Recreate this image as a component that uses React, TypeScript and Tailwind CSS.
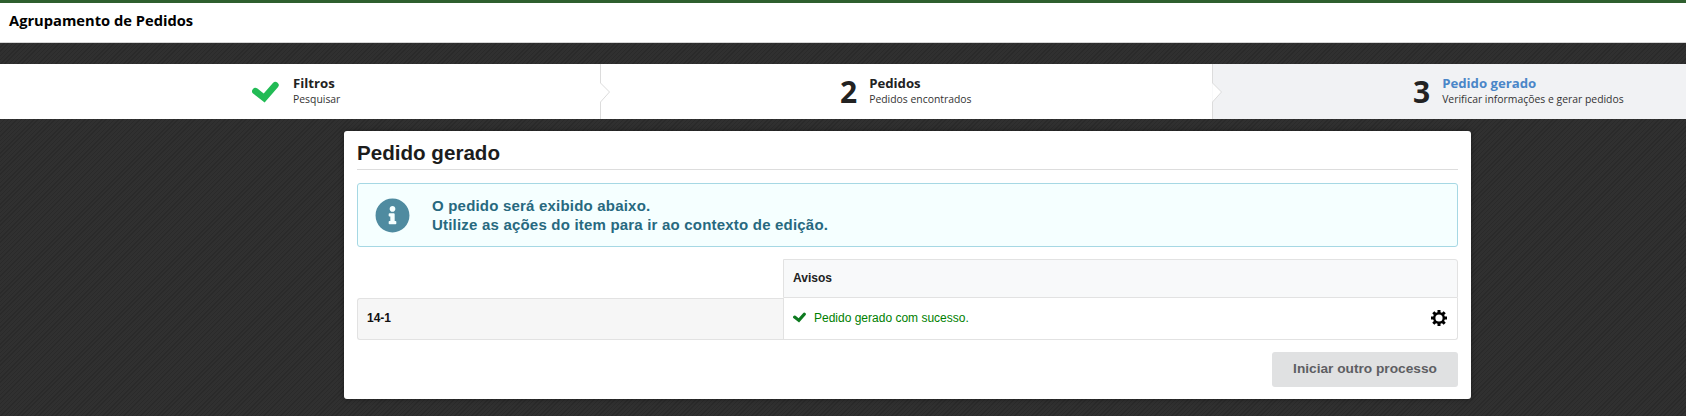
import React from 'react';
import { FaInfoCircle } from 'react-icons/fa';

const pattern =
  'bg-[#2e2e2e] bg-[repeating-linear-gradient(135deg,#2a2a2a_0px,#2a2a2a_1px,#303030_1px,#303030_3px)]';

// Seta entre as etapas do assistente
const Chevron: React.FC = () => (
  <svg className="absolute right-[-11px] top-0 z-10 h-[55px] w-[12px]" viewBox="0 0 12 55">
    <path d="M1.5 0V19L10.5 28L1.5 38V55" fill="#fff" stroke="#dcdcdc" strokeWidth="1" />
  </svg>
);

const CheckIcon: React.FC<{ className: string }> = ({ className }) => (
  <svg className={className} viewBox="0 0 27 22" fill="none">
    <path d="M3.4 10.2L12.2 17L23.4 4.2" stroke="currentColor" strokeWidth="6.6" strokeLinecap="round" />
  </svg>
);

const GearIcon: React.FC = () => (
  <svg className="ml-auto h-[16px] w-[16px] text-black" viewBox="0 0 16 16" fill="none" stroke="currentColor">
    <circle cx="8" cy="8" r="4.8" strokeWidth="2.4" />
    <path
      d="M8 0V3M8 13V16M0 8H3M13 8H16M2.3 2.3L4.4 4.4M11.6 11.6L13.7 13.7M13.7 2.3L11.6 4.4M4.4 11.6L2.3 13.7"
      strokeWidth="3"
    />
  </svg>
);

const StepText: React.FC<{ title: string; text: string; active?: boolean }> = ({ title, text, active }) => (
  <div className="flex flex-col pb-[3px]">
    <span className={active ? 'text-[13.2px] leading-[17px] font-bold text-[#4a86c8]' : 'text-[13.2px] leading-[17px] font-bold text-[#222222]'}>
      {title}
    </span>
    <span className="text-[10.4px] leading-[14px] text-[#333333]">{text}</span>
  </div>
);

const App: React.FC = () => {
  return (
    <div className={`flex min-h-screen flex-col font-['Open_Sans',sans-serif] ${pattern}`}>
      <header className="h-[43px] border-t-[3px] border-b border-t-[#2f5f2f] border-b-[#d5d5d5] bg-white pl-[9px] pt-[8px] text-[14.7px] leading-[19px] font-bold text-black">
        Agrupamento de Pedidos
      </header>

      <div className="mt-[21px] grid h-[55px] grid-cols-[600px_612px_1fr]">
        <div className="relative flex items-center bg-white pl-[252px]">
          <CheckIcon className="mr-[14px] h-[22px] w-[27px] text-[#22bb55]" />
          <StepText title="Filtros" text="Pesquisar" />
          <Chevron />
        </div>
        <div className="relative flex items-center bg-white pl-[240px]">
          <span className="mr-[12px] text-[30px] leading-none font-bold text-[#222222]">2</span>
          <StepText title="Pedidos" text="Pedidos encontrados" />
          <Chevron />
        </div>
        <div className="flex items-center bg-[#f1f2f4] pl-[201px]">
          <span className="mr-[12px] text-[30px] leading-none font-bold text-[#222222]">3</span>
          <StepText title="Pedido gerado" text="Verificar informações e gerar pedidos" active />
        </div>
      </div>

      <main className="mt-3 ml-[344px] h-[268px] w-[1127px] rounded-[3px] bg-white px-[13px] font-['Liberation_Sans',sans-serif] shadow-[0_0_5px_rgba(0,0,0,0.4)]">
        <h1 className="h-[39px] border-b border-[#dddddd] pt-[10px] text-[20.6px] leading-[24px] font-bold text-[#1c1c1c]">
          Pedido gerado
        </h1>

        <div className="mt-[13px] flex h-[64px] items-center rounded-[3px] border border-[#a6d8e4] bg-[#f5ffff] pl-[17px]">
          <FaInfoCircle className="mr-[22px] text-[35px] text-[#4f8ba0]" />
          <p className="text-[15px] leading-[19px] font-bold tracking-[0.2px] text-[#27697f]">
            O pedido será exibido abaixo.
            <br />
            Utilize as ações do item para ir ao contexto de edição.
          </p>
        </div>

        <div className="mt-3 grid h-[81px] grid-cols-[426px_1fr] grid-rows-[39px_42px] text-[12px]">
          <div />
          <div className="flex items-center rounded-tr-[3px] border border-[#e2e2e2] bg-[#f8f9fa] pb-[2px] pl-[9px] font-bold text-[#222222]">
            Avisos
          </div>
          <div className="flex items-center rounded-tl-[3px] rounded-bl-[3px] border-y border-l border-[#e2e2e2] bg-[#f6f6f6] pb-[2px] pl-[9px] font-bold text-[#111111]">
            14-1
          </div>
          <div className="flex items-center rounded-br-[3px] border border-t-0 border-[#e2e2e2] pr-[10px] pb-[2px] pl-[9px] text-[#008000]">
            <CheckIcon className="mr-[8px] h-[11px] w-[13px] text-[#0d7a1f]" />
            <span>Pedido gerado com sucesso.</span>
            <GearIcon />
          </div>
        </div>

        <div className="mt-[12px] flex justify-end">
          <button className="h-[35px] w-[186px] rounded-[3px] bg-[#e0e1e2] text-[13.7px] font-bold text-[#5e5e62]">
            Iniciar outro processo
          </button>
        </div>
      </main>
    </div>
  );
};

export default App;
